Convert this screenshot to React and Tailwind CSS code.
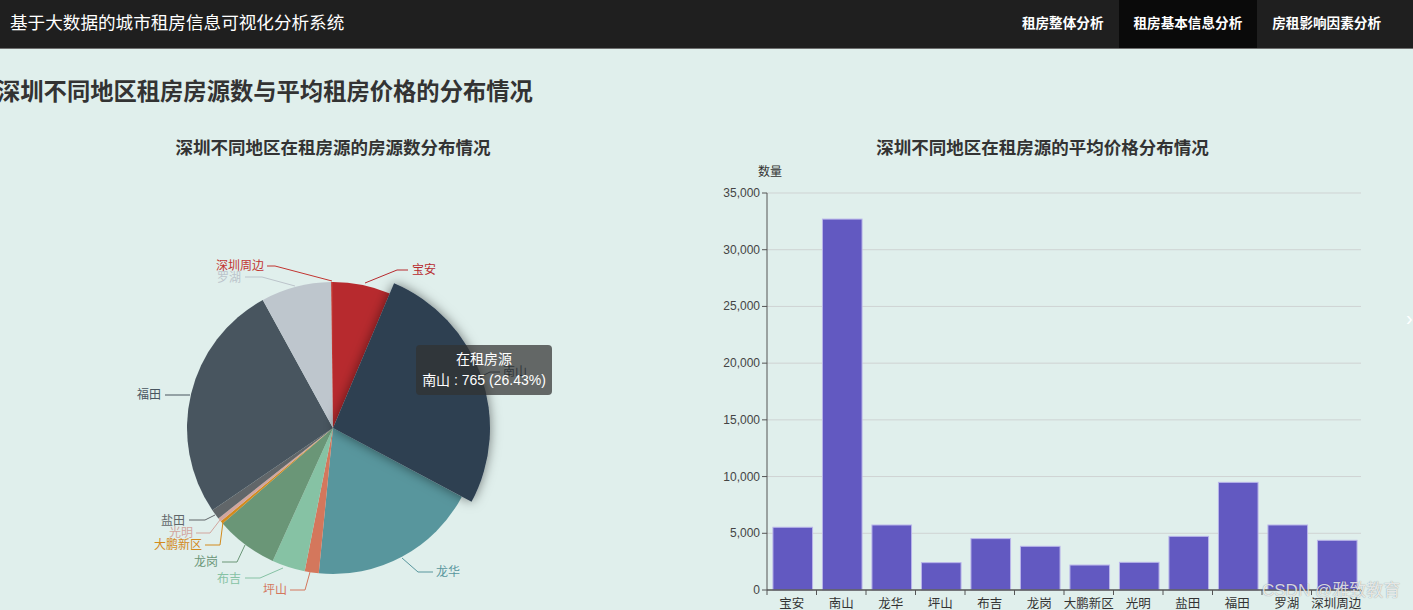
import React from 'react'

const FONT = '"Liberation Sans", "Noto Sans CJK SC", sans-serif'

const pieData = [
  { name: '宝安', value: 184, color: '#b72a2e' },
  { name: '南山', value: 765, color: '#2d3f51' },
  { name: '龙华', value: 543, color: '#58969d' },
  { name: '坪山', value: 45, color: '#d4775c' },
  { name: '布吉', value: 106, color: '#86c2a4' },
  { name: '龙岗', value: 199, color: '#6a9677' },
  { name: '大鹏新区', value: 9, color: '#d38a1c' },
  { name: '光明', value: 12, color: '#d2a59e' },
  { name: '盐田', value: 32, color: '#616669' },
  { name: '福田', value: 768, color: '#48555f' },
  { name: '罗湖', value: 225, color: '#bec6cd' },
  { name: '深圳周边', value: 6, color: '#c23531' },
]

// label leader lines, page coords (y shifted by -160 below)
const pieLabels = [
  { name: '深圳周边', color: '#c23531', pts: [[332, 281], [275, 266], [267, 266]], x: 264, y: 266, anchor: 'end' },
  { name: '罗湖', color: '#bcc4cb', pts: [[295, 286], [262, 277], [245, 277]], x: 241, y: 278, anchor: 'end' },
  { name: '宝安', color: '#b72a2e', pts: [[365, 283], [397, 270], [408, 270]], x: 412, y: 270, anchor: 'start' },
  { name: '南山', color: '#2d3f51', pts: [[480, 377], [490, 372], [500, 372]], x: 503, y: 372, anchor: 'start' },
  { name: '龙华', color: '#58969d', pts: [[402, 558], [418, 572], [433, 572]], x: 436, y: 572, anchor: 'start' },
  { name: '坪山', color: '#d4775c', pts: [[310, 572], [305, 590], [290, 590]], x: 287, y: 590, anchor: 'end' },
  { name: '布吉', color: '#86c2a4', pts: [[283, 568], [260, 578], [245, 578]], x: 241, y: 579, anchor: 'end' },
  { name: '龙岗', color: '#6a9677', pts: [[245, 545], [237, 562], [222, 562]], x: 218, y: 562, anchor: 'end' },
  { name: '大鹏新区', color: '#d38a1c', pts: [[223, 522], [220, 545], [205, 545]], x: 202, y: 545, anchor: 'end' },
  { name: '光明', color: '#d2a59e', pts: [[220, 520], [210, 533], [196, 533]], x: 193, y: 533, anchor: 'end' },
  { name: '盐田', color: '#616669', pts: [[215, 515], [205, 520], [189, 520]], x: 185, y: 521, anchor: 'end' },
  { name: '福田', color: '#48555f', pts: [[190, 395], [165, 395]], x: 161, y: 395, anchor: 'end' },
]

const barData = [
  ['宝安', 5530], ['南山', 32700], ['龙华', 5730], ['坪山', 2410], ['布吉', 4530], ['龙岗', 3850],
  ['大鹏新区', 2200], ['光明', 2440], ['盐田', 4730], ['福田', 9490], ['罗湖', 5730], ['深圳周边', 4380],
]

function sector(cx, cy, r, a0, a1) {
  const rad = (a) => (a * Math.PI) / 180
  const x0 = cx + r * Math.sin(rad(a0))
  const y0 = cy - r * Math.cos(rad(a0))
  const x1 = cx + r * Math.sin(rad(a1))
  const y1 = cy - r * Math.cos(rad(a1))
  const large = a1 - a0 > 180 ? 1 : 0
  return `M${cx},${cy} L${x0},${y0} A${r},${r} 0 ${large} 1 ${x1},${y1} Z`
}

function PieChart() {
  const total = pieData.reduce((s, d) => s + d.value, 0)
  const cx = 333
  const cy = 268
  let acc = 0
  const slices = pieData.map((d) => {
    const a0 = (acc / total) * 360
    acc += d.value
    const a1 = (acc / total) * 360
    return { ...d, a0, a1 }
  })

  return (
    <div className="relative w-[666px] h-[450px]">
      <svg width="666" height="450" style={{ fontFamily: FONT }}>
        <defs>
          <filter id="shadow" x="-30%" y="-30%" width="160%" height="160%">
            <feDropShadow dx="0" dy="0" stdDeviation="6" floodColor="#000" floodOpacity="0.5" />
          </filter>
        </defs>
        {slices.filter((s) => s.name !== '南山').map((s) => (
          <path key={s.name} d={sector(cx, cy, 146, s.a0, s.a1)} fill={s.color} />
        ))}
        {slices.filter((s) => s.name === '南山').map((s) => (
          <path key={s.name} d={sector(cx, cy, 157, s.a0, s.a1)} fill={s.color} filter="url(#shadow)" />
        ))}
        {/* labels */}
        {pieLabels.map((l) => (
          <g key={l.name}>
            <polyline
              points={l.pts.map(([x, y]) => `${x},${y - 160}`).join(' ')}
              fill="none"
              stroke={l.color}
              strokeWidth="1"
            />
            <text x={l.x} y={l.y - 160} fill={l.color} fontSize="12" textAnchor={l.anchor} dominantBaseline="central">
              {l.name}
            </text>
          </g>
        ))}
      </svg>

      {/* Tooltip */}
      <div className="absolute left-[416px] top-[185px] w-[136px] h-[50px] rounded-[4px] bg-[rgba(50,50,50,0.72)] text-white text-[14px] leading-[21px] text-center pt-[4px]">
        <div>在租房源</div>
        <div>南山 : 765 (26.43%)</div>
      </div>
    </div>
  )
}

function BarChart() {
  const left = 77
  const right = 671
  const top = 33
  const bottom = 430
  const max = 35000
  const ticks = [0, 5000, 10000, 15000, 20000, 25000, 30000, 35000]
  const cw = (right - left) / barData.length
  const yOf = (v) => bottom - ((bottom - top) * v) / max

  return (
    <svg width="705" height="450" style={{ fontFamily: FONT }}>
      <text x="80" y="12" fontSize="12" fill="#333" textAnchor="middle" dominantBaseline="central">数量</text>
      {ticks.map((t) => (
        <g key={t}>
          {t > 0 && <line x1={left} x2={right} y1={yOf(t)} y2={yOf(t)} stroke="#cfd3d3" strokeWidth="1" />}
          <line x1={left - 5} x2={left} y1={yOf(t)} y2={yOf(t)} stroke="#555" strokeWidth="1" />
          <text x={left - 7} y={yOf(t)} fontSize="12" fill="#444" textAnchor="end" dominantBaseline="central">
            {t.toLocaleString('en-US')}
          </text>
        </g>
      ))}
      {barData.map(([name, v], i) => {
        const x = left + i * cw + cw * 0.12
        const w = cw * 0.8
        const y = yOf(v)
        return (
          <rect key={name} x={x} y={y} width={w} height={bottom - y} fill="#6259c1" stroke="#b9b5ea" strokeWidth="1" />
        )
      })}
      <line x1={left} x2={left} y1={top} y2={bottom} stroke="#555" strokeWidth="1" />
      <line x1={left} x2={right} y1={bottom} y2={bottom} stroke="#555" strokeWidth="1.5" />
      {barData.map(([name], i) => (
        <g key={name}>
          <line x1={left + i * cw} x2={left + i * cw} y1={bottom} y2={bottom + 5} stroke="#555" strokeWidth="1" />
          <text x={left + i * cw + cw / 2} y={bottom + 14} fontSize="12.5" fill="#333" textAnchor="middle" dominantBaseline="central">
            {name}
          </text>
        </g>
      ))}
      <line x1={right} x2={right} y1={bottom} y2={bottom + 5} stroke="#555" strokeWidth="1" />
    </svg>
  )
}

export default function App() {
  return (
    <div className="relative w-[1413px] h-[610px] overflow-hidden bg-[#e0efec]" style={{ fontFamily: FONT }}>
      {/* Header */}
      <header className="flex items-center justify-between h-[49px] bg-[#1f1f1f] border-b border-[#6e6e6e]">
        <div className="pl-[10px] text-[17.6px] text-white leading-none">基于大数据的城市租房信息可视化分析系统</div>
        <nav className="flex h-full pr-[17px] text-[13.6px] font-bold text-white">
          <a className="flex items-center px-[15px]">租房整体分析</a>
          <a className="flex items-center px-[15px] bg-[#0a0a0a]">租房基本信息分析</a>
          <a className="flex items-center px-[15px]">房租影响因素分析</a>
        </nav>
      </header>

      <main>
        <h1 className="ml-[-3px] mt-[27px] text-[23.3px] leading-[32px] font-bold text-[#333]">
          深圳不同地区租房房源数与平均租房价格的分布情况
        </h1>

        <div className="flex">
          <section className="w-[666px]">
            <h2 className="mt-[28px] text-center text-[17.5px] leading-[24px] font-bold text-[#333]">
              深圳不同地区在租房源的房源数分布情况
            </h2>
            <PieChart />
          </section>

          <section className="ml-[24px] w-[705px]">
            <h2 className="mt-[28px] text-center text-[17.5px] leading-[24px] font-bold text-[#333]">
              深圳不同地区在租房源的平均价格分布情况
            </h2>
            <BarChart />
          </section>
        </div>
      </main>

      {/* Watermark */}
      <div className="absolute left-[1262px] top-[580px] text-[17px] leading-[22px] text-[rgba(255,255,255,0.8)] [text-shadow:0_0_1px_rgba(0,0,0,0.45)]">
        CSDN @雅致教育
      </div>
      <div className="absolute left-[1406px] top-[303px] text-[20px] text-white">›</div>
    </div>
  )
}
